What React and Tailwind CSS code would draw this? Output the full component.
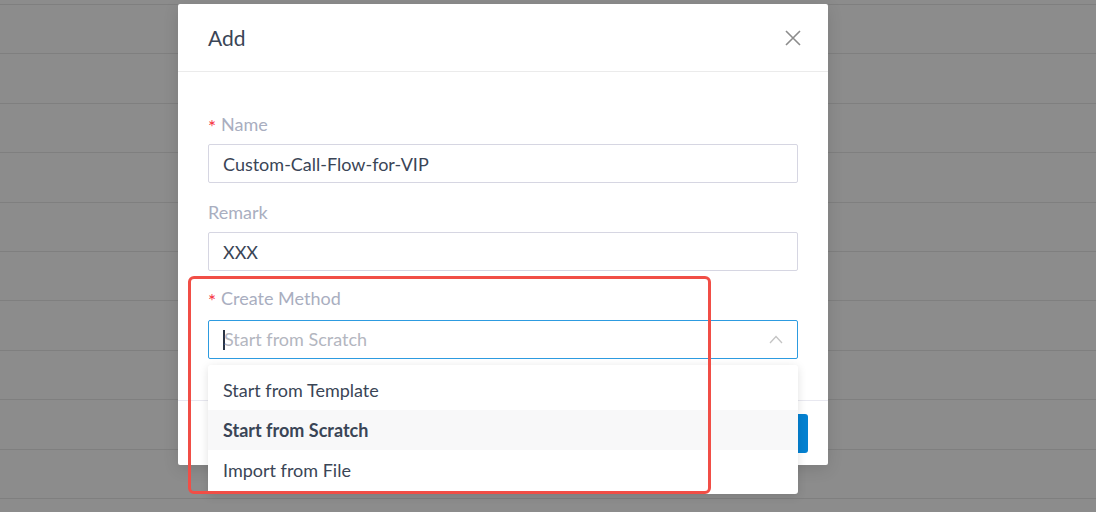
import React from "react";

const rows = Array.from({ length: 11 });

const Label = ({ required, children }) => (
  <label className="flex items-center h-[24px] text-[18px] text-[#a9aec0]">
    {required && <span className="text-[#f5303e] mr-[5px] text-[19px] leading-none mt-[4px]">*</span>}
    {children}
  </label>
);

const App = () => {
  return (
    <div
      className="relative w-[1096px] h-[512px] overflow-hidden bg-[#8c8c8c]"
      style={{ fontFamily: "Lato, 'Noto Sans', sans-serif" }}
    >
      {/* table rows behind the mask */}
      <div className="pt-[4px]">
        {rows.map((_, i) => (
          <div key={i} className="h-[49.4px] border-t border-[#7f7f7f]" />
        ))}
      </div>

      {/* modal */}
      <div className="absolute left-[178px] top-[4px] w-[650px] h-[461px] bg-white rounded-[2px] shadow-[0_4px_16px_rgba(0,0,0,0.12)] flex flex-col">
        <div className="h-[68px] flex items-center justify-between px-[30px] border-b border-[#ebebeb]">
          <span className="text-[21px] text-[#3a4556]">Add</span>
          <svg width="16" height="16" viewBox="0 0 16 16" className="mr-[-3px]">
            <path d="M1 1 L15 15 M15 1 L1 15" stroke="#8c8c8c" strokeWidth="1.6" />
          </svg>
        </div>
        <div className="flex-1 px-[30px] pt-[40px]">
          <Label required>Name</Label>
          <input
            readOnly
            value="Custom-Call-Flow-for-VIP"
            className="mt-[8px] w-full h-[39px] border border-[#d6d6e2] rounded-[2px] px-[14px] text-[18px] text-[#3a4556] outline-none"
          />
          <div className="mt-[17px]">
            <Label>Remark</Label>
          </div>
          <input
            readOnly
            value="XXX"
            className="mt-[8px] w-full h-[39px] border border-[#d6d6e2] rounded-[2px] px-[14px] text-[18px] text-[#3a4556] outline-none"
          />
          <div className="mt-[15px]">
            <Label required>Create Method</Label>
          </div>
          <div className="mt-[10px] w-full h-[39px] border border-[#2d9be0] rounded-[2px] px-[14px] flex items-center justify-between">
            <span className="flex items-center text-[18px] text-[#b3b6c0]">
              <span className="w-[2px] h-[20px] bg-[#2a3444] mr-[-1px]" />
              Start from Scratch
            </span>
            <svg width="14" height="9" viewBox="0 0 14 9">
              <path d="M1 8 L7 1.5 L13 8" fill="none" stroke="#c4c4c4" strokeWidth="1.3" />
            </svg>
          </div>
        </div>
        <div className="h-[65px] border-t border-[#e8e8f0] flex items-center justify-end gap-[10px] px-[20px]">
          <button className="h-[39px] px-[22px] rounded-[3px] border border-[#d6d6e2] text-[16px] text-[#3a4556]">
            Cancel
          </button>
          <button className="h-[39px] px-[26px] rounded-[3px] bg-[#0481d1] text-[16px] text-white">
            OK
          </button>
        </div>
      </div>

      {/* dropdown */}
      <div className="absolute left-[208px] top-[365px] w-[590px] bg-white rounded-[3px] shadow-[0_2px_10px_rgba(0,0,0,0.12)] pt-[5px] pb-[4px]">
        <div className="h-[40px] px-[15px] flex items-center text-[18px] text-[#3a4556]">Start from Template</div>
        <div className="h-[40px] px-[15px] flex items-center text-[18px] font-bold text-[#3a4556] bg-[#f8f8f9]">Start from Scratch</div>
        <div className="h-[40px] px-[15px] flex items-center text-[18px] text-[#3a4556]">Import from File</div>
      </div>

      {/* annotation */}
      <div className="absolute left-[188px] top-[276px] w-[523px] h-[218px] border-[3px] border-[#f14e46] rounded-[6px]" />
    </div>
  );
};

export default App;
